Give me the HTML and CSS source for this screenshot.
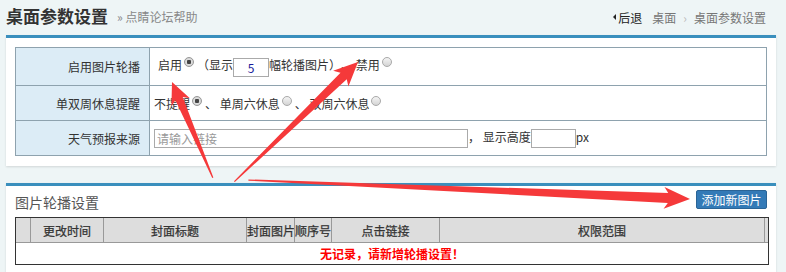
FILE: index.html
```html
<!DOCTYPE html>
<html lang="zh-CN">
<head>
    <meta charset="UTF-8">
    <title>桌面参数设置</title>
    <link rel="stylesheet" href="styles.css">
</head>
<body>
    <div class="page-head">
        <h1 class="title">桌面参数设置</h1>
        <span class="help">» 点睛论坛帮助</span>
        <div class="crumbs">
            <span class="back"><i class="tri"></i>后退</span>
            <span class="crumb">桌面</span>
            <span class="sep">›</span>
            <span class="crumb">桌面参数设置</span>
        </div>
    </div>

    <div class="box">
        <table class="form-table">
            <tr class="row-first">
                <th>启用图片轮播</th>
                <td><span class="lead">启用</span><input type="radio" name="slide" checked><span class="pun open">（</span>显示<input type="text" class="num" value="5">幅轮播图片<span class="pun">）</span><span class="pun">、</span> 禁用<input type="radio" name="slide"></td>
            </tr>
            <tr>
                <th>单双周休息提醒</th>
                <td>不提醒<input type="radio" name="rest" checked><span class="pun">、</span> 单周六休息<input type="radio" name="rest"><span class="pun">、</span> 双周六休息<input type="radio" name="rest"></td>
            </tr>
            <tr>
                <th>天气预报来源</th>
                <td><input type="text" class="url" placeholder="请输入链接"><span class="pun">，</span> 显示高度<input type="text" class="height">px</td>
            </tr>
        </table>
    </div>

    <div class="box box-list">
        <div class="box-head">
            <span class="box-title">图片轮播设置</span>
            <button class="btn">添加新图片</button>
        </div>
        <table class="list-table">
            <colgroup>
                <col class="c0"><col class="c1"><col class="c2"><col class="c3">
                <col class="c4"><col class="c5"><col class="c6"><col class="c7">
            </colgroup>
            <tr>
                <th class="first"></th>
                <th>更改时间</th>
                <th>封面标题</th>
                <th>封面图片</th>
                <th>顺序号</th>
                <th>点击链接</th>
                <th>权限范围</th>
                <th></th>
            </tr>
            <tr>
                <td colspan="8" class="empty">无记录，请新增轮播设置！</td>
            </tr>
        </table>
    </div>

    <!-- annotation arrows -->
    <svg class="marks" width="786" height="272" viewBox="0 0 786 272">
        <polygon fill="#f5393a" transform="translate(172 82) rotate(-113.1)"
            points="0,0 -22,-10 -18,-4 -104,-0.6 -104,0.6 -18,4 -22,10"/>
        <polygon fill="#f5393a" transform="translate(358 62) rotate(-44.06)"
            points="0,0 -24,-11 -20,-4.5 -172,-0.6 -172,0.6 -20,4.5 -24,11"/>
        <polygon fill="#f5393a" transform="translate(690 199) rotate(2.46)"
            points="0,0 -26,-11 -22,-5 -442,-0.6 -442,0.6 -22,5 -26,11"/>
    </svg>
</body>
</html>
```

FILE: styles.css
```css
body {
    margin: 0;
    background-color: #eef5f6;
    color: #333;
    font-family: 'Noto Sans CJK SC', 'Noto Sans', sans-serif;
    font-size: 12px;
    position: relative;
    height: 272px;
    overflow: hidden;
}

.page-head {
    display: flex;
    align-items: center;
    height: 35px;
    padding: 0 20px 0 6px;
}

.title {
    margin: 0;
    font-size: 17px;
    font-weight: bold;
    color: #333;
    line-height: 20px;
    margin-top: -4px;
}

.help {
    margin-left: 9px;
    color: #888;
    margin-top: -2px;
}

.crumbs {
    margin-left: auto;
    display: flex;
    align-items: center;
    gap: 10px;
    color: #777;
    margin-top: -1px;
}

.back {
    color: #222;
    display: flex;
    align-items: center;
}

.tri {
    width: 0;
    height: 0;
    border-top: 3px solid transparent;
    border-bottom: 3px solid transparent;
    border-right: 3px solid #222;
    margin-right: 2px;
}

.sep {
    color: #bbb;
    margin: 0 -3px;
}

.box {
    margin: 0 10px 0 6px;
    background-color: #fff;
    border-top: 3px solid #3a8fbd;
    padding: 9px 9px 10px;
    box-shadow: 0 1px 2px rgba(0, 0, 0, 0.12);
}

.form-table {
    width: 100%;
    border-collapse: collapse;
    border: 1px solid #8ea2ae;
}

.form-table th,
.form-table td {
    border: 1px solid #8ea2ae;
    height: 34px;
    padding: 0;
    font-weight: normal;
    white-space: nowrap;
}

.form-table .row-first th,
.form-table .row-first td {
    height: 37px;
}

.form-table th {
    width: 134px;
    background-color: #dcecf6;
    text-align: right;
    padding-right: 9px;
    box-sizing: border-box;
}

.form-table td {
    padding-left: 4px;
}

.lead {
    margin-left: 4px;
}

/* full-width punctuation, kept at full width */
.pun {
    display: inline-block;
    width: 12px;
    text-align: left;
}

.pun.open {
    text-align: right;
}

input[type="radio"] {
    appearance: none;
    -webkit-appearance: none;
    width: 10px;
    height: 10px;
    margin: 0 3px 0 2px;
    border: 1px solid #aaa;
    border-radius: 50%;
    background: linear-gradient(#f4f4f4, #d4d4d4);
    vertical-align: 3px;
    box-sizing: border-box;
}

input[type="radio"]:checked {
    background: radial-gradient(circle, #444 0, #444 2px, #ddd 2.5px, #c9c9c9 100%);
    border-color: #999;
}

input[type="text"] {
    height: 19px;
    box-sizing: border-box;
    border: 1px solid #aaa;
    margin: 0;
    padding: 0 2px;
    font-family: inherit;
    font-size: 12px;
    vertical-align: middle;
}

.num {
    width: 36px;
    text-align: center;
    color: #1a1a9a;
}

.url {
    width: 314px;
}

.url::placeholder {
    color: #999;
}

.height {
    width: 45px;
}

.box-list {
    margin-top: 17px;
    padding-top: 4px;
}

.box-head {
    display: flex;
    align-items: center;
    justify-content: space-between;
    height: 19px;
    padding-bottom: 8px;
}

.box-title {
    font-size: 14px;
    line-height: 16px;
    color: #555;
    margin-top: 4px;
}

.btn {
    height: 19px;
    width: 71px;
    padding: 0;
    border: 1px solid #2a6496;
    border-radius: 2px;
    background-color: #337ab7;
    color: #fff;
    font-family: inherit;
    font-size: 12px;
    line-height: 17px;
}

.list-table {
    width: 100%;
    table-layout: fixed;
    border-collapse: separate;
    border-spacing: 0;
    border: 1px solid #333;
}

.list-table th {
    background-color: #ddd;
    height: 25px;
    padding: 0;
    font-weight: normal;
    color: #333;
    border-left: 1px solid #999;
    border-bottom: 1px solid #999;
    box-sizing: border-box;
    font-size: 12px;
    white-space: nowrap;
    overflow: hidden;
    -webkit-text-stroke: 0.25px #333;
}

.list-table th.first {
    border-left: none;
}

.c0 { width: 14px; }
.c1 { width: 73px; }
.c2 { width: 143px; }
.c3 { width: 48px; }
.c4 { width: 37px; }
.c5 { width: 108px; }
.c6 { width: 325px; }
.c7 { width: 4px; }

.empty {
    text-align: center;
    color: #f00;
    font-weight: bold;
    height: 21px;
    line-height: 21px;
    padding: 0;
}

.marks {
    position: absolute;
    top: 0;
    left: 0;
    pointer-events: none;
}
```
